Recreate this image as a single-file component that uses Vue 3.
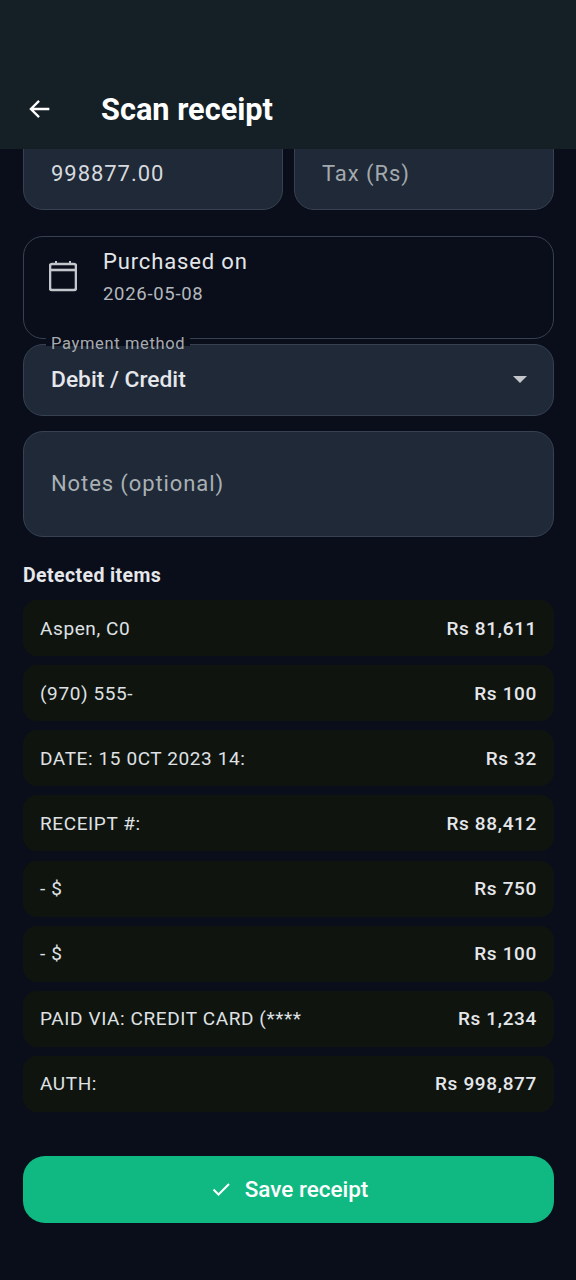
<script setup>
const items = [
  { name: "Aspen, C0", amount: "Rs 81,611" },
  { name: "(970) 555-", amount: "Rs 100" },
  { name: "DATE: 15 0CT 2023 14:", amount: "Rs 32" },
  { name: "RECEIPT #:", amount: "Rs 88,412" },
  { name: "- $", amount: "Rs 750" },
  { name: "- $", amount: "Rs 100" },
  { name: "PAID VIA: CREDIT CARD (****", amount: "Rs 1,234" },
  { name: "AUTH:", amount: "Rs 998,877" },
];
</script>

<template>
  <div class="screen">
    <header class="app-bar">
      <svg class="back" viewBox="0 0 24 24" width="28" height="28">
        <path d="M20 12H4.8M11.2 5l-7 7 7 7" fill="none" stroke="#fff" stroke-width="2" />
      </svg>
      <h1>Scan receipt</h1>
    </header>

    <main class="content">
      <div class="amount-row">
        <div class="field value">998877.00</div>
        <div class="field hint">Tax (Rs)</div>
      </div>

      <div class="date-card">
        <svg class="calendar" viewBox="0 0 28 32" width="28" height="32">
          <path d="M7 1v4M21 1v4" stroke="#c3c7cc" stroke-width="2" fill="none" />
          <rect x="1" y="4" width="26" height="26" rx="2" fill="none" stroke="#c3c7cc" stroke-width="2.6" />
          <path d="M1 10h26" stroke="#c3c7cc" stroke-width="2.6" />
        </svg>
        <div class="date-text">
          <div class="date-title">Purchased on</div>
          <div class="date-value">2026-05-08</div>
        </div>
      </div>

      <div class="select">
        <span class="select-label">Payment method</span>
        <span class="select-value">Debit / Credit</span>
        <span class="caret"></span>
      </div>

      <div class="notes">Notes (optional)</div>

      <h2>Detected items</h2>

      <div class="items">
        <div v-for="(item, index) in items" :key="index" class="item">
          <span class="item-name">{{ item.name }}</span>
          <span class="item-amount">{{ item.amount }}</span>
        </div>
      </div>

      <button class="save-btn">
        <svg viewBox="0 0 24 24" width="24" height="24">
          <path d="M4.5 12.5l5 5L20 7" fill="none" stroke="#fff" stroke-width="2" />
        </svg>
        <span>Save receipt</span>
      </button>
    </main>
  </div>
</template>

<style scoped>
.screen {
  width: 576px;
  height: 1280px;
  background: #0a0e1a;
  color: #e8eaed;
  font-family: Roboto, "Liberation Sans", sans-serif;
  display: flex;
  flex-direction: column;
  overflow: hidden;
}

.app-bar {
  height: 149px;
  flex-shrink: 0;
  box-sizing: border-box;
  background: #151f26;
  display: flex;
  align-items: center;
  padding: 69px 0 0 26px;
  position: relative;
  z-index: 1;
}

.back {
  flex-shrink: 0;
}

.app-bar h1 {
  margin: 0 0 0 47px;
  font-size: 30.7px;
  font-weight: 700;
  color: #fff;
}

.content {
  flex: 1;
  padding: 0 22px 0 23px;
  min-height: 0;
}

.amount-row {
  display: flex;
  gap: 11px;
  margin-top: -20px;
}

.field {
  flex: 1;
  height: 81px;
  box-sizing: border-box;
  background: #1f2937;
  border: 1.5px solid #374151;
  border-radius: 20px;
  padding: 29px 27px 0;
  font-size: 22px;
  letter-spacing: 0.95px;
  line-height: 30px;
}

.value {
  color: #d6d9dd;
}

.hint {
  color: #a3a9ad;
}

.date-card {
  margin-top: 26px;
  height: 103px;
  box-sizing: border-box;
  border: 1.5px solid #374151;
  border-radius: 20px;
  display: flex;
  padding: 11px 0 0 25px;
}

.calendar {
  margin-top: 12px;
}

.date-text {
  margin-left: 26px;
}

.date-title {
  font-size: 22px;
  letter-spacing: 0.85px;
  line-height: 28px;
  color: #e3e5e8;
}

.date-value {
  margin-top: 6px;
  font-size: 18.5px;
  letter-spacing: 0.7px;
  line-height: 24px;
  color: #b4b8bd;
}

.select {
  position: relative;
  margin-top: 5px;
  height: 72px;
  box-sizing: border-box;
  background: #1f2937;
  border: 1.5px solid #374151;
  border-radius: 20px;
  display: flex;
  align-items: center;
  justify-content: space-between;
  padding: 0 26px 2px 27px;
}

.select-label {
  position: absolute;
  left: 22px;
  top: -11px;
  padding: 0 5px;
  background: #0a0e1a;
  font-size: 16.5px;
  letter-spacing: 0.65px;
  line-height: 20px;
  color: #a7abb0;
  height: 12px;
  overflow: visible;
}

.select-value {
  font-size: 22.8px;
  font-weight: 500;
  color: #e5e7eb;
}

.caret {
  width: 0;
  height: 0;
  border-left: 7px solid transparent;
  border-right: 7px solid transparent;
  border-top: 7px solid #c3c7cc;
}

.notes {
  margin-top: 15px;
  height: 106px;
  box-sizing: border-box;
  background: #1f2937;
  border: 1.5px solid #374151;
  border-radius: 20px;
  padding: 0 27px 2px;
  display: flex;
  align-items: center;
  font-size: 22px;
  letter-spacing: 0.9px;
  color: #a9b0b4;
}

h2 {
  margin: 27px 0 0;
  font-size: 19.5px;
  font-weight: 700;
  letter-spacing: 0.4px;
  line-height: 24px;
  color: #e5e7eb;
}

.items {
  margin-top: 12px;
  display: flex;
  flex-direction: column;
  gap: 9.14px;
}

.item {
  height: 56px;
  box-sizing: border-box;
  background: #10140f;
  border-radius: 14px;
  padding: 0 17px;
  display: flex;
  align-items: center;
  justify-content: space-between;
}

.item-name {
  font-size: 19px;
  letter-spacing: 0.6px;
  color: #dfe1e4;
}

.item-amount {
  font-size: 19px;
  font-weight: 500;
  letter-spacing: 0.65px;
  color: #e5e7eb;
}

.save-btn {
  margin-top: 44px;
  width: 100%;
  height: 67px;
  border: none;
  border-radius: 22px;
  background: #10b981;
  color: #fff;
  font-family: inherit;
  font-size: 22.5px;
  font-weight: 500;
  display: flex;
  align-items: center;
  justify-content: center;
  gap: 12px;
}
</style>
